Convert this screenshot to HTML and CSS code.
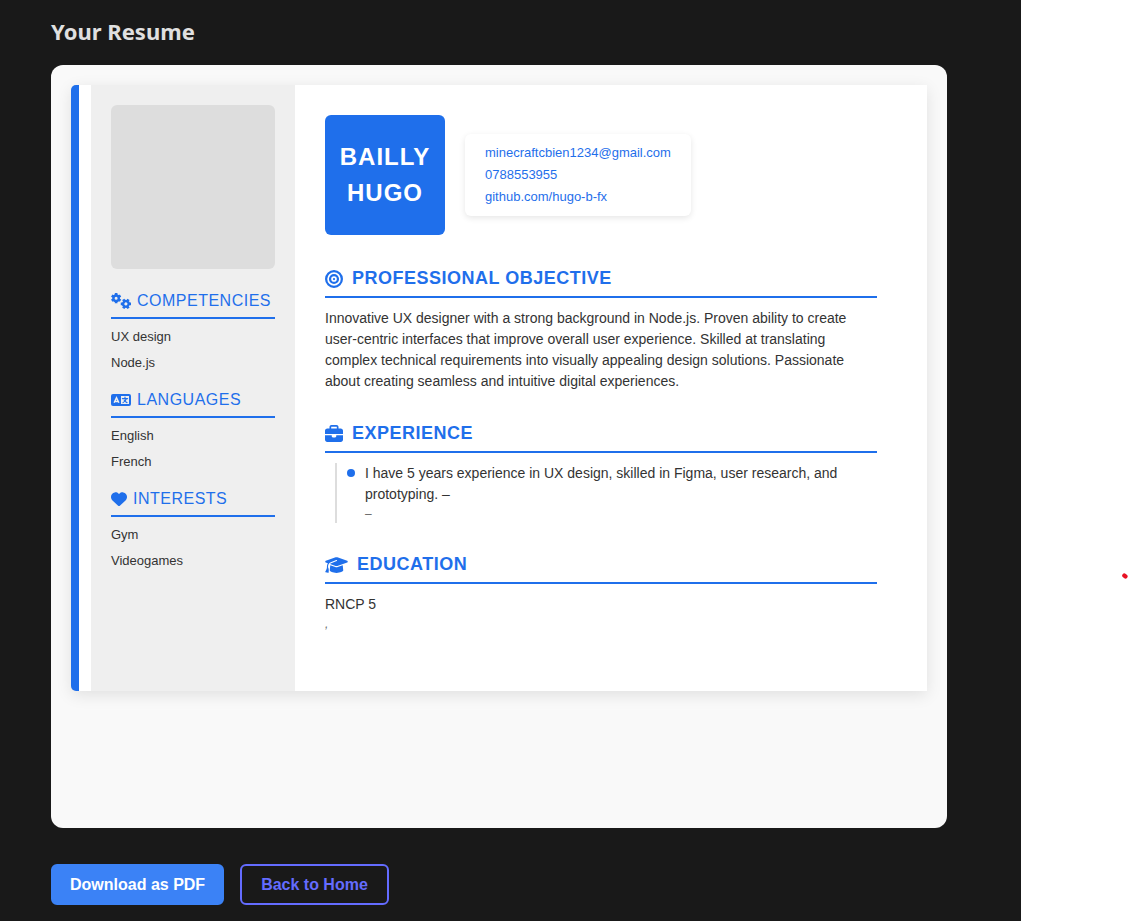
FILE: index.html
```html
<!DOCTYPE html>
<html lang="en">
<head>
<meta charset="utf-8">
<title>Your Resume</title>
<link rel="stylesheet" href="styles.css">
</head>
<body>
<main class="app">
  <h1 class="title">Your Resume</h1>
  <div class="preview">
    <article class="resume">
      <aside class="sidebar">
        <div class="photo"></div>
        <section class="side-section">
          <h2 class="side-heading">
            <svg class="side-icon wide" viewBox="0 0 640 512" aria-hidden="true">
              <g transform="translate(164 164)">
                <circle r="86" fill="none" stroke="currentColor" stroke-width="76"/>
                <g stroke="currentColor" stroke-width="84">
                  <path d="M0-100V-164M0 100V164"/>
                  <path d="M0-100V-164M0 100V164" transform="rotate(60)"/>
                  <path d="M0-100V-164M0 100V164" transform="rotate(120)"/>
                </g>
              </g>
              <g transform="translate(476 348) rotate(30)">
                <circle r="86" fill="none" stroke="currentColor" stroke-width="76"/>
                <g stroke="currentColor" stroke-width="84">
                  <path d="M0-100V-164M0 100V164"/>
                  <path d="M0-100V-164M0 100V164" transform="rotate(60)"/>
                  <path d="M0-100V-164M0 100V164" transform="rotate(120)"/>
                </g>
              </g>
            </svg>
            Competencies
          </h2>
          <ul class="side-list"><li>UX design</li><li>Node.js</li></ul>
        </section>
        <section class="side-section">
          <h2 class="side-heading">
            <svg class="side-icon wide" viewBox="0 0 640 512" aria-hidden="true">
              <rect y="64" width="640" height="384" rx="64" fill="currentColor"/>
              <path class="cutout" d="M320 128H576V384H320Z"/>
              <path class="cutout-line" d="M100 344L176 184L252 344M132 300H220"/>
              <path d="M448 160V204M364 210H532M492 216C474 270 436 312 384 340M424 262C444 294 474 322 512 340" fill="none" stroke="currentColor" stroke-width="36" stroke-linecap="round"/>
            </svg>
            Languages
          </h2>
          <ul class="side-list"><li>English</li><li>French</li></ul>
        </section>
        <section class="side-section">
          <h2 class="side-heading">
            <svg class="side-icon" viewBox="0 0 512 512" aria-hidden="true"><path fill="currentColor" d="M47.6 300.4L228.3 469.1c7.5 7 17.4 10.9 27.7 10.9s20.2-3.9 27.7-10.9L464.4 300.4c30.4-28.3 47.6-68 47.6-109.5v-5.8c0-69.9-50.5-129.5-119.4-141C347 36.5 300.6 51.4 268 84L256 96 244 84c-32.6-32.6-79-47.5-124.6-39.9C50.5 55.6 0 115.2 0 185.1v5.8c0 41.5 17.2 81.2 47.6 109.5z"/></svg>
            Interests
          </h2>
          <ul class="side-list"><li>Gym</li><li>Videogames</li></ul>
        </section>
      </aside>
      <div class="content">
        <header class="header">
          <div class="name">BAILLY HUGO</div>
          <address class="contact">
            <a href="mailto:minecraftcbien1234@gmail.com">minecraftcbien1234@gmail.com</a>
            <a href="tel:0788553955">0788553955</a>
            <a href="https://github.com/hugo-b-fx">github.com/hugo-b-fx</a>
          </address>
        </header>
        <section class="section">
          <h2 class="heading">
            <svg class="icon" viewBox="0 0 512 512" aria-hidden="true"><g fill="none" stroke="currentColor" stroke-width="64"><circle cx="256" cy="256" r="224"/><circle cx="256" cy="256" r="112"/></g><circle cx="256" cy="256" r="32" fill="currentColor"/></svg>
            Professional Objective
          </h2>
          <p class="text">Innovative UX designer with a strong background in Node.js. Proven ability to create user-centric interfaces that improve overall user experience. Skilled at translating complex technical requirements into visually appealing design solutions. Passionate about creating seamless and intuitive digital experiences.</p>
        </section>
        <section class="section">
          <h2 class="heading">
            <svg class="icon" viewBox="0 0 512 512" aria-hidden="true"><path fill="currentColor" d="M184 48l144 0c4.4 0 8 3.6 8 8l0 40L176 96l0-40c0-4.4 3.6-8 8-8zm-56 8l0 40L64 96C28.7 96 0 124.7 0 160l0 96 192 0 128 0 192 0 0-96c0-35.3-28.7-64-64-64l-64 0 0-40c0-30.9-25.1-56-56-56L184 0c-30.9 0-56 25.1-56 56zM512 288l-192 0 0 32c0 17.7-14.3 32-32 32l-64 0c-17.7 0-32-14.3-32-32l0-32L0 288 0 416c0 35.3 28.7 64 64 64l384 0c35.3 0 64-28.7 64-64l0-128z"/></svg>
            Experience
          </h2>
          <ul class="timeline">
            <li class="job">
              <p class="text">I have 5 years experience in UX design, skilled in Figma, user research, and prototyping. –</p>
              <p class="meta">–</p>
            </li>
          </ul>
        </section>
        <section class="section">
          <h2 class="heading">
            <svg class="icon cap" viewBox="0 0 640 512" aria-hidden="true"><path fill="currentColor" d="M320 32c-8.100 0-16.100 1.400-23.700 4.100L15.800 137.400C6.300 140.900 0 149.900 0 160s6.300 19.100 15.800 22.600l57.900 20.900C57.300 229.300 48 259.800 48 291.900v28.100c0 28.400-10.800 57.700-22.300 80.800c-6.500 13-13.900 25.800-22.500 37.600C0 442.700-.9 448.300 .9 453.400s6 8.900 11.200 10.200l64 16c4.200 1.100 8.700 .3 12.400-2s6.300-6.100 7.100-10.400c8.600-42.800 4.300-81.200-2.100-108.700C90.300 344.300 86 329.800 80 316.500V291.900c0-30.200 10.200-58.700 27.900-81.500c12.900-15.500 29.600-28 49.200-35.700l157-61.700c8.200-3.200 17.500 .8 20.700 9s-.8 17.500-9 20.700l-157 61.700c-12.400 4.900-23.300 12.400-32.200 21.600l159.600 57.600c7.600 2.700 15.600 4.100 23.700 4.100s16.100-1.400 23.700-4.100L624.200 182.600c9.500-3.400 15.800-12.500 15.800-22.600s-6.300-19.100-15.800-22.600L343.700 36.100C336.100 33.400 328.100 32 320 32zM128 408c0 35.300 86 72 192 72s192-36.700 192-72L496.700 262.600 354.500 314c-11.100 4-22.800 6-34.500 6s-23.500-2-34.500-6L143.300 262.600 128 408z"/></svg>
            Education
          </h2>
          <p class="text">RNCP 5</p>
          <p class="meta place">,</p>
        </section>
      </div>
    </article>
  </div>
  <div class="actions">
    <button class="button primary" type="button">Download as PDF</button>
    <button class="button outline" type="button">Back to Home</button>
  </div>
</main>
<svg class="mark" viewBox="0 0 6 6" aria-hidden="true"><path d="M2.400 2.600L3.400 3.400" stroke="#e81224" stroke-width="4.400" stroke-linecap="round"/></svg>
</body>
</html>
```
FILE: styles.css
```css
* {
  box-sizing: border-box;
}

body {
  margin: 0;
  background: #fff;
  font-family: "Liberation Sans", Arial, sans-serif;
  color: #333;
}

h1, h2, p, ul {
  margin: 0;
  padding: 0;
}

ul {
  list-style: none;
}

.app {
  min-height: 100vh;
  margin-right: 107px;
  padding: 13px 74px 16px 51px;
  background: #191919;
}

.title {
  margin-bottom: 16px;
  font-family: "Noto Sans", sans-serif;
  font-size: 22px;
  line-height: 36px;
  color: #e0e0e0;
}

.preview {
  min-height: 763px;
  padding: 20px;
  border-radius: 12px;
  background: #f9f9f9;
}

.resume {
  display: flex;
  padding-left: 12px;
  border-left: 8px solid #1f6feb;
  border-radius: 5px 0 0 5px;
  background: #fff;
  box-shadow: 0 4px 16px rgba(0, 0, 0, 0.1);
}

.sidebar {
  flex: 0 0 204px;
  padding: 20px;
  background: #efefef;
}

.photo {
  aspect-ratio: 1;
  margin-bottom: 20px;
  border-radius: 6px;
  background: #ddd;
}

.side-section {
  margin-bottom: 15px;
}

.side-heading {
  display: flex;
  align-items: center;
  gap: 6px;
  margin-bottom: 8px;
  padding-bottom: 4px;
  border-bottom: 2px solid #1f6feb;
  font-size: 16px;
  font-weight: 400;
  line-height: 24px;
  letter-spacing: 0.5px;
  text-transform: uppercase;
  color: #1f6feb;
}

.side-icon {
  flex: none;
  width: 16px;
  height: 16px;
}

.side-icon.wide {
  width: 20px;
}

.cutout {
  fill: #efefef;
}

.cutout-line {
  fill: none;
  stroke: #efefef;
  stroke-width: 48px;
}

.side-list {
  display: grid;
  gap: 6px;
  font-size: 13px;
  line-height: 20px;
}

.content {
  flex: 1;
  min-width: 0;
  padding: 30px 50px 30px 30px;
}

.header {
  display: flex;
  align-items: center;
  gap: 20px;
  margin-bottom: 30px;
}

.name {
  display: flex;
  align-items: center;
  width: 120px;
  height: 120px;
  padding: 10px;
  border-radius: 6px;
  background: #1f6feb;
  color: #fff;
  font-size: 24px;
  font-weight: 700;
  line-height: 36px;
  letter-spacing: 1px;
  text-align: center;
}

.contact {
  display: flex;
  flex-direction: column;
  padding: 8px 20px;
  border-radius: 6px;
  background: #fff;
  box-shadow: 0 2px 6px rgba(0, 0, 0, 0.1);
  font-size: 13px;
  font-style: normal;
  line-height: 22px;
}

.contact a {
  color: #1f6feb;
  text-decoration: none;
}

.section {
  margin-bottom: 28px;
}

.heading {
  display: flex;
  align-items: center;
  gap: 9px;
  margin-bottom: 10px;
  padding-bottom: 5px;
  border-bottom: 2px solid #1f6feb;
  font-size: 18px;
  line-height: 26px;
  letter-spacing: 0.5px;
  text-transform: uppercase;
  color: #1f6feb;
}

.icon {
  flex: none;
  width: 18px;
  height: 18px;
  margin-top: 2px;
}

.icon.cap {
  width: 23px;
}

.text {
  font-size: 14px;
  line-height: 21px;
}

.meta {
  font-size: 12px;
  line-height: 18px;
  color: #666;
}

.place {
  font-style: italic;
}

.timeline {
  margin-left: 10px;
  padding-left: 28px;
  border-left: 2px solid #ddd;
}

.job {
  position: relative;
}

.job::before {
  content: "";
  position: absolute;
  top: 6px;
  left: -18px;
  width: 8px;
  height: 8px;
  border-radius: 50%;
  background: #1f6feb;
}

.actions {
  display: flex;
  gap: 16px;
  margin-top: 36px;
}

.button {
  padding: 10px 17px;
  border: 2px solid #3b82f6;
  border-radius: 6px;
  font-family: inherit;
  font-size: 16px;
  font-weight: 700;
  line-height: 17px;
}

.primary {
  background: #3b82f6;
  color: #fff;
}

.outline {
  padding: 10px 19px;
  border-color: #646cff;
  background: transparent;
  color: #646cff;
}

.mark {
  position: absolute;
  top: 573px;
  right: 0;
  width: 6px;
  height: 6px;
}
```
